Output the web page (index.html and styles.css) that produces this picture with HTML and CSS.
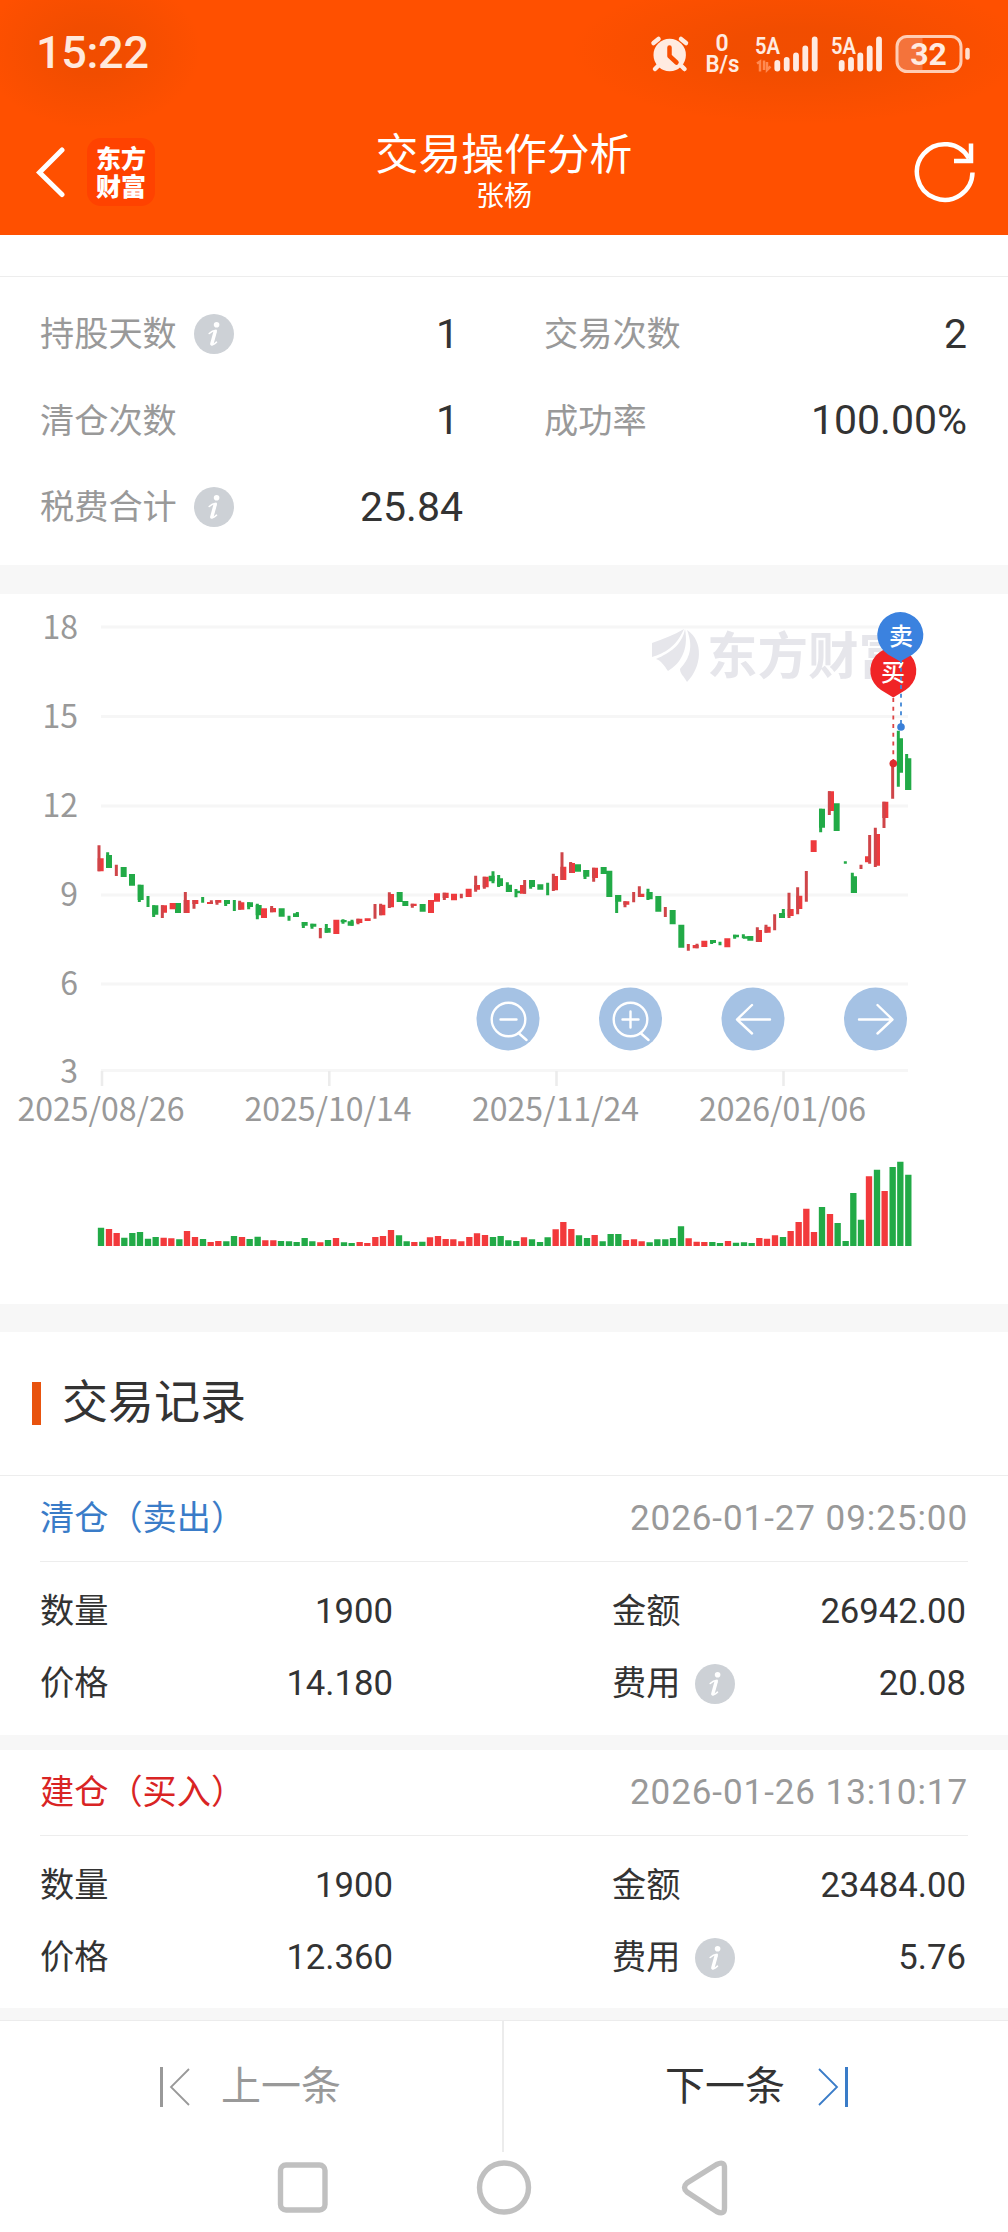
FILE: index.html
```html
<!DOCTYPE html>
<html lang="zh-CN">
<head>
<meta charset="utf-8">
<title>交易操作分析</title>
<link rel="stylesheet" href="styles.css">
</head>
<body>
<svg class="defs" width="0" height="0" aria-hidden="true">
  <symbol id="info" viewBox="0 0 40 40">
    <circle cx="20" cy="20" r="20" fill="#cdd1d6"/>
    <circle cx="22.6" cy="10.8" r="2.8" fill="#fff"/>
    <path d="M15.2 19.500Q19 16 22 16.500L18.500 28.500Q18 32.500 22.500 28.200" fill="none" stroke="#fff" stroke-width="1.600" stroke-linecap="round"/>
    <path d="M21.200 17.500L17.800 30" stroke="#fff" stroke-width="3.400" stroke-linecap="round"/>
  </symbol>
</svg>

<header class="header">
  <div class="status">
    <span class="clock">15:22</span>
    <svg class="status-icons" width="336" height="50" viewBox="640 30 336 50">
      <g fill="#ffebe1" stroke="none">
        <circle cx="669.7" cy="55" r="16.2"/>
        <g stroke="#ffebe1" stroke-width="4.5" stroke-linecap="round">
          <path d="M653.5 43l5-4M686 43l-5-4M659 65l-4 4M680.500 65l4 4"/>
        </g>
        <path d="M669.500 47.500v8.500l7 6.500" fill="none" stroke="#f84e02" stroke-width="4.5" stroke-linecap="round" stroke-linejoin="round"/>
        <text class="net" x="722" y="50.500" text-anchor="middle">0</text>
        <text class="net" x="722.500" y="71.500" text-anchor="middle" textLength="34" lengthAdjust="spacingAndGlyphs">B/s</text>
        <text class="net" x="755" y="53.500" textLength="25" lengthAdjust="spacingAndGlyphs">5A</text>
        <text class="net" x="831" y="53.500" textLength="25" lengthAdjust="spacingAndGlyphs">5A</text>
        <g stroke="#ffebe1" stroke-width="5.800" stroke-linecap="round">
          <path d="M777.300 63v5.500M786.700 60v8.500M796 55.500v13M805.300 48.500v20M814.700 39.500v29"/>
          <path d="M841.700 63v5.500M851 60v8.500M860.300 55.500v13M869.700 48.500v20M879 39.500v29"/>
        </g>
        <path d="M757 63.500l3-2v10M764 60.500v9.500M767 62v8l3.500-3.500" fill="none" stroke="#ff8a52" stroke-width="2.500"/>
        <path d="M906 37h16.500v34H906a9 9 0 0 1-9-9V46a9 9 0 0 1 9-9z" fill="#f4733b"/>
        <rect x="897" y="36.500" width="64" height="35" rx="10" fill="none" stroke="#ffcdb4" stroke-width="3"/>
        <path d="M967.500 50v7.500" stroke="#ffe0d0" stroke-width="4.500" stroke-linecap="round"/>
        <text class="battery" x="928.500" y="65" text-anchor="middle">32</text>
      </g>
    </svg>
  </div>
  <div class="navbar">
    <div class="nav-left">
      <svg width="30" height="52" viewBox="0 0 30 52"><path d="M26 4L3.500 26.500L26 48.500" fill="none" stroke="#fff" stroke-width="5" stroke-linecap="round"/></svg>
      <div class="brand"><span>东方</span><span>财富</span></div>
    </div>
    <div class="titles"><h1>交易操作分析</h1><p>张杨</p></div>
    <div class="nav-right">
      <svg width="64" height="64" viewBox="914 140 64 64" fill="none" stroke="#fff" stroke-width="4.500"><path d="M973.500 172.500A27.800 27.800 0 1 1 970 158.500"/><path d="M955 161h17V143.500"/></svg>
    </div>
  </div>
</header>

<section class="stats">
  <div class="stat"><span class="label">持股天数</span><svg class="info"><use href="#info"/></svg><span class="value single">1</span></div>
  <div class="stat"><span class="label">交易次数</span><span class="value">2</span></div>
  <div class="stat"><span class="label">清仓次数</span><span class="value single">1</span></div>
  <div class="stat"><span class="label">成功率</span><span class="value">100.00%</span></div>
  <div class="stat"><span class="label">税费合计</span><svg class="info"><use href="#info"/></svg><span class="value">25.84</span></div>
</section>

<section class="chart">
<svg width="1008" height="710" viewBox="0 594 1008 710">
  <path d="M101 627H908M101 716.500H908M101 806H908M101 895H908M101 984H908M101 1070.500H908" stroke="#f6f6f6" stroke-width="3"/>
  <path d="M102 1071v15M329.300 1071v15M556.500 1071v15M783.500 1071v15" stroke="#ececec" stroke-width="2.500"/>
  <g class="axis" text-anchor="end">
    <text x="78" y="639">18</text><text x="78" y="728">15</text><text x="78" y="817">12</text>
    <text x="78" y="906">9</text><text x="78" y="995">6</text><text x="78" y="1083">3</text>
  </g>
  <g class="axis" text-anchor="middle">
    <text x="101" y="1121">2025/08/26</text><text x="328" y="1121">2025/10/14</text>
    <text x="555.500" y="1121">2025/11/24</text><text x="782.500" y="1121">2026/01/06</text>
  </g>
  <g fill="#e6e6eb">
    <path d="M652 643C663 639 674 635 684 629C676 647 665 653 652 657z"/>
    <path d="M656 659C670 653 682 645 685 629C689 650 680 664 668 671C665 667 661 660 656 659z"/>
    <path d="M687 630C704 641 702 667 687 682C684 676 680 674 680 669C689 659 694 648 687 630z"/>
    <text class="watermark" x="707" y="674">东方财富</text>
  </g>
  <g transform="translate(80 820) scale(.33333)" fill="none">
    <g stroke="#22aa47">
      <path stroke-width="18" d="M87 105V144M131 141V171M156 162V197M182 194V240M226 256V284M294 249V279M441 240V252M510 247V261M536 255V286M605 265V290M648 280V291M674 306V317M700 311V320M743 324V338M791 300V307M812 304V317M959 216V246M976 243V258M1028 252V275M1235 167V184M1260 175V198M1287 194V216M1314 212V220M1356 180V201M1381 193V209M1494 133V155M1519 150V170M1571 141V162M1588 152V231M1615 225V245M1709 216V238M1735 228V275M1778 270V313M1804 314V383M1899 360V369M1968 344V352M1998 349V356M2011 348V362M2106 279V294M2226 -34V23M2270 -50V33M2322 169V219M2460 -245V-142M2485 -185V-90"/>
      <path stroke-width="9" d="M83 97V144M178 194V246M204 228V261M221 256V291M368 231V248M437 240V258M463 240V273M506 247V268M532 251V298M627 287V302M652 276V291M670 306V324M696 311V326M739 312V338M789 298V311M816 299V317M1239 154V190M1256 165V201M1282 187V216M1308 207V232M1352 180V206M1403 188V226M1515 150V177M1610 225V279M1704 206V240M1895 360V372M1920 365V376M1964 344V356M1990 343V355M2110 267V294M2222 -34V37M2296 124V131M2317 158V219M2455 -268V-100M2480 -198V-90"/>
    </g>
    <g stroke="#ee3a3d">
      <path stroke-width="18" d="M62 115V154M252 256V278M278 249V268M320 240V279M346 240V252M390 246V252M415 240V248M484 247V269M552 265V294M579 264V277M769 299V342M838 296V309M863 295V303M907 254V286M933 222V262M1001 251V258M1053 240V279M1071 220V245M1097 218V234M1122 221V241M1166 206V231M1191 195V209M1217 170V202M1329 195V221M1425 168V211M1450 140V180M1476 129V159M1545 143V174M1639 244V254M1684 221V231M1847 375V385M1873 362V381M1942 355V382M2037 330V366M2063 320V338M2132 267V288M2158 227V267M2201 61V96M2253 -86V-27M2364 109V127M2391 42V137M2416 -55V-6"/>
    </g>
    <g stroke="#cf4549">
      <path stroke-width="9" d="M57 76V154M109 134V168M247 256V294M316 216V279M342 240V266M394 241V252M411 240V254M479 242V269M575 258V277M721 324V355M834 296V313M885 252V296M902 251V286M928 217V264M997 251V263M1093 218V240M1144 221V235M1187 167V215M1213 170V206M1334 180V221M1420 161V213M1446 97V180M1472 126V159M1541 143V185M1635 244V262M1661 216V247M1678 199V231M1756 261V291M1825 372V392M1851 371V385M2032 322V366M2058 314V338M2084 283V331M2127 218V294M2153 202V283M2179 153V245M2248 -86V-15M2343 134V147M2369 45V131M2386 23V141M2412 -55V24M2438 -170V-64"/>
    </g>
  </g>
  <g transform="translate(80 1130) scale(.33333)" fill="none" stroke-width="19">
    <path stroke="#22aa47" d="M63 293V348M133 323V348M157 309V348M180 306V348M204 326V348M227 321V348M298 328V348M369 327V348M439 334V348M462 318V348M509 327V348M533 320V348M603 333V348M627 334V348M650 336V348M674 324V348M697 334V348M744 330V348M792 337V348M815 339V348M957 316V348M980 334V348M1027 335V348M1239 321V348M1262 318V348M1285 331V348M1309 333V348M1356 328V348M1380 336V348M1403 322V348M1497 316V348M1521 324V348M1568 334V348M1592 312V348M1615 312V348M1709 337V348M1732 328V348M1756 328V348M1779 324V348M1803 289V348M1897 336V348M1920 339V348M1968 338V348M1992 337V348M2015 339V348M2109 321V348M2226 231V348M2273 279V348M2297 333V348M2320 189V348M2343 269V348M2391 119V348M2438 111V348M2461 95V348M2485 134V348"/>
    <path stroke="#f23a3c" d="M87 297V348M110 309V348M251 323V348M274 325V348M321 303V348M345 321V348M392 336V348M415 333V348M486 321V348M556 331V348M580 331V348M721 337V348M768 324V348M839 336V348M862 339V348M886 321V348M909 318V348M933 300V348M1003 336V348M1050 322V348M1074 318V348M1097 327V348M1120 328V348M1144 334V348M1168 321V348M1191 310V348M1215 315V348M1332 322V348M1427 298V348M1450 276V348M1474 297V348M1544 315V348M1638 330V348M1662 328V348M1685 334V348M1826 325V348M1850 335V348M1873 336V348M1944 333V348M2038 324V348M2061 326V348M2085 316V348M2132 303V348M2156 276V348M2179 236V348M2202 306V348M2250 252V348M2367 139V348M2414 183V348"/>
  </g>
  <g>
    <path d="M893.300 698V763" stroke="#dd4444" stroke-width="1.800" stroke-dasharray="4 4.700"/>
    <circle cx="893.300" cy="763.500" r="3.800" fill="#dd2c2e"/>
    <path d="M893.300 697.500L881 690A23 23 0 1 1 905.600 690z" fill="#f02426"/>
    <text class="pin" x="893" y="681">买</text>
    <path d="M901 659V724" stroke="#4287d6" stroke-width="1.800" stroke-dasharray="4 4.700"/>
    <circle cx="901" cy="727" r="3.800" fill="#3a7fd8"/>
    <path d="M900.300 661.500L888 654.500A23 23 0 1 1 912.600 654.500z" fill="#3b82df"/>
    <text class="pin" x="901" y="644.500">卖</text>
  </g>
  <g fill="#a5c2e4">
    <circle cx="508" cy="1019" r="31.500"/><circle cx="630.500" cy="1019" r="31.500"/><circle cx="753" cy="1019" r="31.500"/><circle cx="875.500" cy="1019" r="31.500"/>
  </g>
  <g fill="none" stroke="#fff" stroke-width="2.400" stroke-linecap="round" stroke-linejoin="round">
    <circle cx="508.500" cy="1019.500" r="16.800"/><path d="M500.500 1019.500h16M518.500 1033l8 7"/>
    <circle cx="630.500" cy="1019.500" r="16.800"/><path d="M622.500 1019.500h16M630.500 1011.500v16M640.500 1033l8 7"/>
    <path d="M770 1019.500H737M752 1005L737 1019.500L752 1033.500"/>
    <path d="M859 1019.500H892M877.500 1005L892.500 1019.500L877.500 1033.500"/>
  </g>
</svg>
</section>

<h2 class="section-title">交易记录</h2>

<article class="record">
  <div class="record-head"><span class="sell">清仓（卖出）</span><time>2026-01-27 09:25:00</time></div>
  <div class="record-body">
    <div class="field"><span>数量</span><b>1900</b></div><div class="field"><span>金额</span><b>26942.00</b></div>
    <div class="field"><span>价格</span><b>14.180</b></div><div class="field"><span>费用</span><svg class="info"><use href="#info"/></svg><b>20.08</b></div>
  </div>
</article>
<article class="record last">
  <div class="record-head"><span class="buy">建仓（买入）</span><time>2026-01-26 13:10:17</time></div>
  <div class="record-body">
    <div class="field"><span>数量</span><b>1900</b></div><div class="field"><span>金额</span><b>23484.00</b></div>
    <div class="field"><span>价格</span><b>12.360</b></div><div class="field"><span>费用</span><svg class="info"><use href="#info"/></svg><b>5.76</b></div>
  </div>
</article>

<footer class="pager">
  <div class="prev"><svg width="32" height="42" viewBox="0 0 32 42" fill="none" stroke="#999"><path d="M2.500 1V41" stroke-width="3"/><path d="M30 3L12 21L30 39" stroke-width="1.800"/></svg><span>上一条</span></div>
  <div class="next"><span>下一条</span><svg width="32" height="42" viewBox="0 0 32 42" fill="none" stroke="#3a7cc8"><path d="M29.500 1V41" stroke-width="3"/><path d="M2 3L20 21L2 39" stroke-width="1.800"/></svg></div>
</footer>
<nav class="system">
  <svg width="1008" height="80" viewBox="0 2152 1008 80" fill="none" stroke="#c0c0c0" stroke-width="5.400">
    <rect x="280.500" y="2165" width="44.500" height="45" rx="5.500"/>
    <circle cx="504" cy="2187.500" r="24.500"/>
    <path d="M716.500 2164.500L687 2183Q682 2187.500 687 2192L716.500 2211.500Q724.500 2215.500 724.500 2208V2168Q724.500 2160.500 716.500 2164.500z"/>
  </svg>
</nav>
</body>
</html>
```
FILE: styles.css
```css
* { box-sizing: border-box; margin: 0; padding: 0; }
body { width: 1008px; height: 2232px; background: #fff; color: #333; font-family: "Noto Sans CJK SC", sans-serif; }
svg { display: block; flex: none; }
.defs { position: absolute; }
.header {
  height: 235px; color: #fff; background:
    radial-gradient(ellipse 110px 80px at 92px 50px, rgba(120,50,0,.1) 30%, transparent),
    radial-gradient(ellipse 230px 75px at 800px 50px, rgba(120,50,0,.1) 30%, transparent),
    #ff5000;
}
.status { height: 105px; display: flex; justify-content: space-between; padding: 30px 32px 0 36px; }
.clock { font: 500 45px/46px Roboto, sans-serif; color: #ffe9dd; letter-spacing: -.3px; }
.net { font: 600 23px Roboto, sans-serif; }
.battery { font: 700 32px Roboto, sans-serif; }
.navbar { height: 130px; display: grid; grid-template-columns: 1fr auto 1fr; padding: 0 31px 0 36px; }
.nav-left { display: flex; align-items: center; gap: 21px; padding-top: 3px; height: 130px; }
.brand { width: 68px; height: 68px; border-radius: 14px; background: #ff4200; display: flex; flex-direction: column; align-items: center; justify-content: center; font: 900 25px/28px "Noto Sans CJK SC", sans-serif; padding-bottom: 2px; }
.titles { text-align: center; padding-top: 19px; margin-left: -5px; }
.titles h1 { font-size: 42.8px; line-height: 54px; font-weight: 400; }
.titles p { font-size: 28px; line-height: 32px; }
.nav-right { display: flex; justify-content: flex-end; padding-top: 35px; }
.stats { margin-top: 41px; border-top: 1px solid #ededed; border-bottom: 29px solid #f7f7f7; height: 318px; padding: 11px 40px 0; display: grid; grid-template-columns: 424px 424px; column-gap: 80px; grid-auto-rows: 86.5px; align-content: start; }
.stat { display: flex; align-items: center; }
.label { font-size: 34.2px; line-height: 50px; color: #999; }
.info { width: 40px; height: 40px; margin: 6px 0 0 17px; }
.value { margin-left: auto; font: 41px/50px Roboto, sans-serif; padding: 5px 1px 0 0; }
.value.single { padding-right: 5px; }
.chart { height: 710px; }
.axis { font-size: 32px; fill: #999; }
.watermark { font-size: 50.5px; font-weight: 700; }
.pin { font-size: 24px; font-weight: 500; fill: #fff; text-anchor: middle; }
.section-title { border-top: 28px solid #f7f7f7; height: 171px; display: flex; align-items: center; font-size: 46px; line-height: 60px; font-weight: 400; padding: 0 0 11px 32px; gap: 21px; }
.section-title::before { content: ""; width: 9px; height: 43px; margin-top: 10px; background: #e8530e; }
.record { height: 274px; border-top: 1px solid #ededed; border-bottom: 14px solid #f7f7f7; padding: 0 40px; }
.record.last { height: 271px; border-top-color: #f7f7f7; border-bottom-width: 12px; }
.record-head { height: 86px; border-bottom: 1px solid #ededed; display: flex; align-items: center; justify-content: space-between; padding-bottom: 7px; font-size: 34.2px; }
.sell { color: #3a7cc8; }
.buy { color: #d92424; }
.record-head time { font: 35px/40px Roboto, sans-serif; color: #999; letter-spacing: .93px; padding-top: 7px; }
.record-body { display: grid; grid-template-columns: 354px 355px; column-gap: 218px; grid-auto-rows: 72px; padding-top: 10px; }
.field { display: flex; align-items: center; font-size: 34.2px; line-height: 50px; }
.field b { margin-left: auto; font: 34.700px/50px Roboto, sans-serif; padding: 6px 1px 0 0; }
.field .info { margin: 8px 0 0 15px; }
.pager { height: 132px; border-top: 1px solid #ececec; display: grid; grid-template-columns: 1fr 1fr; font-size: 40px; line-height: 50px; }
.pager > div { display: flex; align-items: center; }
.pager span { margin-top: -8px; }
.prev { color: #999; border-right: 2px solid #ececec; padding-left: 159px; gap: 30px; }
.next { padding-left: 161px; gap: 32px; }
.system { height: 80px; }
```
